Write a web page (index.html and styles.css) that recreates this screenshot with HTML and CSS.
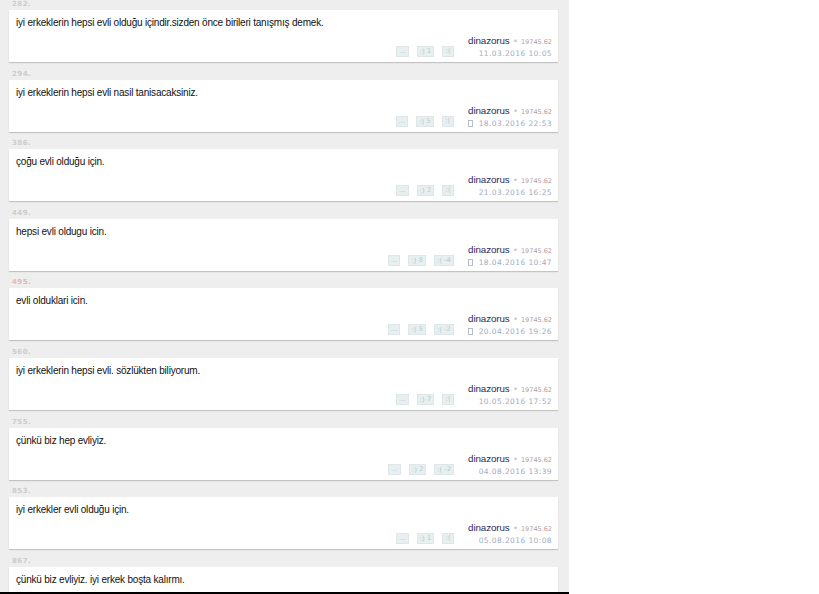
FILE: index.html
```html
<!DOCTYPE html>
<html lang="tr">
<head>
  <meta charset="UTF-8">
  <title>entry listesi</title>
  <link rel="stylesheet" href="styles.css">
</head>
<body>
<div class="page">
  <div class="entry">
    <div class="num">282.</div>
    <div class="card">
      <p class="text">iyi erkeklerin hepsi evli olduğu içindir.sizden önce birileri tanışmış demek.</p>
      <div class="foot">
        <span class="btn">...</span><span class="btn">:) <sup>1</sup></span><span class="btn">:(</span>
        <div class="author">
          <div><span class="nick">dinazorus</span><span class="dot">•</span><span class="score">19745.62</span></div>
          <div class="date">11.03.2016 10:05</div>
        </div>
      </div>
    </div>
  </div>
  <div class="entry">
    <div class="num">294.</div>
    <div class="card">
      <p class="text">iyi erkeklerin hepsi evli nasil tanisacaksiniz.</p>
      <div class="foot">
        <span class="btn">...</span><span class="btn">:) <sup>5</sup></span><span class="btn">:(</span>
        <div class="author">
          <div><span class="nick">dinazorus</span><span class="dot">•</span><span class="score">19745.62</span></div>
          <div class="date"><span class="edit"></span>18.03.2016 22:53</div>
        </div>
      </div>
    </div>
  </div>
  <div class="entry">
    <div class="num">386.</div>
    <div class="card">
      <p class="text">çoğu evli olduğu için.</p>
      <div class="foot">
        <span class="btn">...</span><span class="btn">:) <sup>2</sup></span><span class="btn">:(</span>
        <div class="author">
          <div><span class="nick">dinazorus</span><span class="dot">•</span><span class="score">19745.62</span></div>
          <div class="date">21.03.2016 16:25</div>
        </div>
      </div>
    </div>
  </div>
  <div class="entry">
    <div class="num">449.</div>
    <div class="card">
      <p class="text">hepsi evli oldugu icin.</p>
      <div class="foot">
        <span class="btn">...</span><span class="btn">:) <sup>8</sup></span><span class="btn">:( <sup>-4</sup></span>
        <div class="author">
          <div><span class="nick">dinazorus</span><span class="dot">•</span><span class="score">19745.62</span></div>
          <div class="date"><span class="edit"></span>18.04.2016 10:47</div>
        </div>
      </div>
    </div>
  </div>
  <div class="entry">
    <div class="num pink">495.</div>
    <div class="card">
      <p class="text">evli olduklari icin.</p>
      <div class="foot">
        <span class="btn">...</span><span class="btn">:) <sup>5</sup></span><span class="btn">:( <sup>-2</sup></span>
        <div class="author">
          <div><span class="nick">dinazorus</span><span class="dot">•</span><span class="score">19745.62</span></div>
          <div class="date"><span class="edit"></span>20.04.2016 19:26</div>
        </div>
      </div>
    </div>
  </div>
  <div class="entry">
    <div class="num">560.</div>
    <div class="card">
      <p class="text">iyi erkeklerin hepsi evli. sözlükten biliyorum.</p>
      <div class="foot">
        <span class="btn">...</span><span class="btn">:) <sup>7</sup></span><span class="btn">:(</span>
        <div class="author">
          <div><span class="nick">dinazorus</span><span class="dot">•</span><span class="score">19745.62</span></div>
          <div class="date">10.05.2016 17:52</div>
        </div>
      </div>
    </div>
  </div>
  <div class="entry">
    <div class="num">755.</div>
    <div class="card">
      <p class="text">çünkü biz hep evliyiz.</p>
      <div class="foot">
        <span class="btn">...</span><span class="btn">:) <sup>2</sup></span><span class="btn">:( <sup>-2</sup></span>
        <div class="author">
          <div><span class="nick">dinazorus</span><span class="dot">•</span><span class="score">19745.62</span></div>
          <div class="date">04.08.2016 13:39</div>
        </div>
      </div>
    </div>
  </div>
  <div class="entry">
    <div class="num">853.</div>
    <div class="card">
      <p class="text">iyi erkekler evli olduğu için.</p>
      <div class="foot">
        <span class="btn">...</span><span class="btn">:) <sup>1</sup></span><span class="btn">:(</span>
        <div class="author">
          <div><span class="nick">dinazorus</span><span class="dot">•</span><span class="score">19745.62</span></div>
          <div class="date">05.08.2016 10:08</div>
        </div>
      </div>
    </div>
  </div>
  <div class="entry">
    <div class="num">867.</div>
    <div class="card">
      <p class="text">çünkü biz evliyiz. iyi erkek boşta kalırmı.</p>
    </div>
  </div>
</div>
</body>
</html>
```

FILE: styles.css
```css
body {
  margin: 0;
  background: #fff;
  font-family: "DejaVu Sans", Verdana, sans-serif;
}
.page {
  width: 569px;
  height: 592px;
  overflow: hidden;
  background: #eeeeee;
  border-bottom: 2px solid #000;
}
.entry {
  padding: 0 11px 0 9px;
  margin-bottom: 7.6px;
}
.num {
  height: 10px;
  padding-left: 3px;
  font-size: 7px;
  line-height: 9px;
  font-weight: bold;
  letter-spacing: 0.5px;
  color: #cccccc;
}
.num.pink {
  color: #e2b9b4;
}
.card {
  height: 52px;
  background: #fff;
  box-shadow: 0 1px 1px rgba(0,0,0,0.18);
  display: flex;
  flex-direction: column;
  justify-content: space-between;
}
.text {
  margin: 0;
  padding: 7px 7px 0;
  font-family: "Liberation Sans", Arial, sans-serif;
  font-size: 10px;
  line-height: 12px;
  color: #111;
  letter-spacing: -0.2px;
}
.foot {
  display: flex;
  align-items: flex-end;
  justify-content: flex-end;
  padding: 0 6px 6px 0;
}
.btn {
  height: 11px;
  min-width: 12px;
  padding: 0 2px;
  margin-right: 8px;
  box-sizing: border-box;
  background: #e7eff0;
  border: 1px solid #dde7e8;
  font-size: 7px;
  line-height: 9px;
  color: #bcc7cb;
  text-align: center;
  margin-bottom: 1px;
}
.btn:nth-child(3) {
  margin-right: 6px;
}
.btn sup {
  font-size: 6.5px;
  vertical-align: 1px;
}
.author {
  margin-left: 8px;
  text-align: right;
}
.nick {
  font-family: "Liberation Sans", Arial, sans-serif;
  font-size: 9.8px;
  letter-spacing: -0.1px;
  color: #2b2b5c;
}
.dot {
  margin: 0 3px;
  font-size: 9px;
  line-height: 8px;
  color: #c3c9dc;
}
.score {
  font-size: 6.5px;
  color: #b39d9d;
}
.date {
  margin-top: 1px;
  font-size: 7.5px;
  line-height: 9px;
  letter-spacing: 0.4px;
  color: #a3abbf;
}
.edit {
  display: inline-block;
  width: 3px;
  height: 5px;
  margin-right: 6px;
  border: 1px solid #b7bdca;
  vertical-align: -1px;
}
```
